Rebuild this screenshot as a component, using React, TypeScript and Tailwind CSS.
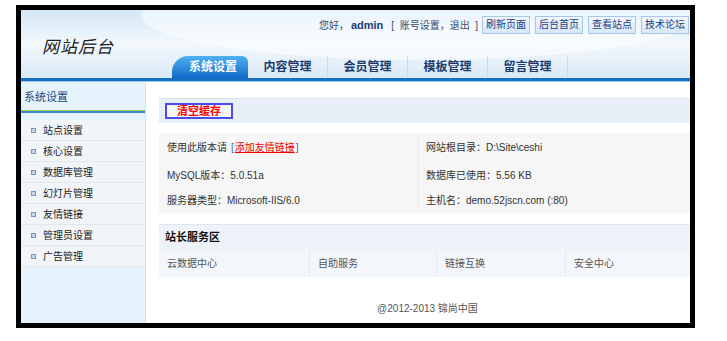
const font = "font-['Liberation_Sans','Noto_Sans_CJK_SC',sans-serif]";

const tabs = ["内容管理", "会员管理", "模板管理", "留言管理"];
const topButtons = ["刷新页面", "后台首页", "查看站点", "技术论坛"];
const menu = ["站点设置", "核心设置", "数据库管理", "幻灯片管理", "友情链接", "管理员设置", "广告管理"];
const services = [
  { name: "云数据中心", w: "w-[151px]" },
  { name: "自助服务", w: "w-[127px]" },
  { name: "链接互换", w: "w-[129px]" },
  { name: "安全中心", w: "flex-1" },
];

export default function App() {
  return (
    <div className={`w-[727px] h-[341px] bg-white pl-[16px] pt-[5px] ${font}`}>
      <div className="w-[679px] h-[323px] border-[5px] border-black flex flex-col overflow-hidden bg-white">
        {/* Header */}
        <div className="relative h-[68px] shrink-0 overflow-hidden bg-gradient-to-b from-[#d4e7f6] via-[#f3f8fc] to-[#d9e9f6]">
          <div className="absolute -top-[40px] left-[120px] w-[560px] h-[90px] rounded-[50%] bg-white/50" />
          <div className="absolute left-[21px] top-[25px] text-[17px] italic text-[#222] tracking-[1px]">网站后台</div>

          {/* top right */}
          <div className="absolute right-[1px] top-[6px] flex items-center text-[10px]">
            <span className="text-[#3a4a6a]">您好，</span>
            <span className="font-bold text-[11px] text-[#1e3a78] ml-[2px]">admin</span>
            <span className="text-[#3a4a6a] ml-[8px]">[&nbsp;&nbsp;账号设置，退出&nbsp;&nbsp;]</span>
            <div className="flex gap-[5px] ml-[4px]">
              {topButtons.map((b) => (
                <div
                  key={b}
                  className="w-[48px] h-[18px] flex items-center justify-center border border-[#a9c6e4] bg-gradient-to-b from-[#f2f8fd] to-[#d6e8f7] text-[10px] text-[#1c3c86] leading-none"
                >
                  {b}
                </div>
              ))}
            </div>
          </div>

          {/* tabs */}
          <div className="absolute left-[151px] bottom-0 flex items-end">
            <div className="w-[76px] h-[22px] rounded-tl-[16px] rounded-tr-[6px] bg-gradient-to-b from-[#4fb0f0] to-[#0a6cc9] flex items-center justify-center text-white text-[12px] font-bold pl-[6px]">
              系统设置
            </div>
            {tabs.map((t) => (
              <div key={t} className="w-[80px] h-[22px] flex items-center justify-center border-r border-[#c9dcec] text-[12px] font-bold text-[#1e3b6e]">
                {t}
              </div>
            ))}
          </div>
        </div>
        <div className="h-[3px] shrink-0 bg-[#1970c2]" />
        <div className="h-[1px] shrink-0 bg-[#9cc8ec]" />

        {/* Body */}
        <div className="flex flex-1 min-h-0">
          {/* Sidebar */}
          <div className="w-[125px] shrink-0 bg-[#e7f3fc] border-r border-[#d0e2f0] flex flex-col">
            <div className="h-[25px] mt-[3px] flex items-center pl-[3px] text-[11px] text-[#1d4a7a]">系统设置</div>
            <div className="h-[1px] bg-[#a4cf4c]" />
            <div className="h-[2px] bg-[#3b85c9]" />
            <div className="mt-[7px] bg-[#f2f5f8]">
              {menu.map((m) => (
                <div key={m} className="h-[21px] flex items-center border-b border-[#e2e8ee]">
                  <span className="w-[5px] h-[5px] ml-[10px] border border-[#7f97b8] bg-[#c6d6ea]" />
                  <span className="ml-[7px] text-[10px] text-[#222]">{m}</span>
                </div>
              ))}
            </div>
          </div>

          {/* Main */}
          <div className="flex-1 bg-white pl-[13px] pt-[16px] flex flex-col">
            <div className="h-[25px] bg-[#e8eff7] border-t border-[#dbe5ef] flex items-center pl-[6px]">
              <div className="w-[68px] h-[16px] border-2 border-[#4b4bf0] bg-[#f4f6fb] flex items-center justify-center text-[11px] font-bold text-[#f00] leading-none">
                清空缓存
              </div>
            </div>

            <div className="mt-[10px] bg-[#f6f6f6] flex text-[10px] text-[#333]">
              <div className="w-[260px] border-r border-[#ececec]">
                <div className="h-[29px] flex items-center pl-[8px]">
                  使用此版本请
                  <span className="text-[#4a6a9a] ml-[4px]">[</span>
                  <span className="text-[#e00] underline mx-[1px]">添加友情链接</span>
                  <span className="text-[#4a6a9a]">]</span>
                </div>
                <div className="h-[26px] flex items-center pl-[8px]">MySQL版本：5.0.51a</div>
                <div className="h-[25px] flex items-center pl-[8px]">服务器类型：Microsoft-IIS/6.0</div>
              </div>
              <div className="flex-1">
                <div className="h-[29px] flex items-center pl-[7px]">网站根目录：D:\Site\ceshi</div>
                <div className="h-[26px] flex items-center pl-[7px]">数据库已使用：5.56 KB</div>
                <div className="h-[25px] flex items-center pl-[7px]">主机名：demo.52jscn.com (:80)</div>
              </div>
            </div>

            <div className="mt-[11px] h-[26px] bg-[#eef3f9] border-t border-[#dde6f1] flex items-center pl-[6px] text-[11px] font-bold text-[#111]">
              站长服务区
            </div>
            <div className="h-[27px] bg-[#f3f6fa] flex text-[10px] text-[#555]">
              {services.map((s, i) => (
                <div key={s.name} className={`${s.w} flex items-center pl-[8px] ${i < 3 ? "border-r border-[#e6ebf1]" : ""}`}>
                  {s.name}
                </div>
              ))}
            </div>

            <div className="mt-[24px] text-center text-[10px] text-[#555] pl-[6px]">@2012-2013 锦尚中国</div>
          </div>
        </div>
      </div>
    </div>
  );
}
